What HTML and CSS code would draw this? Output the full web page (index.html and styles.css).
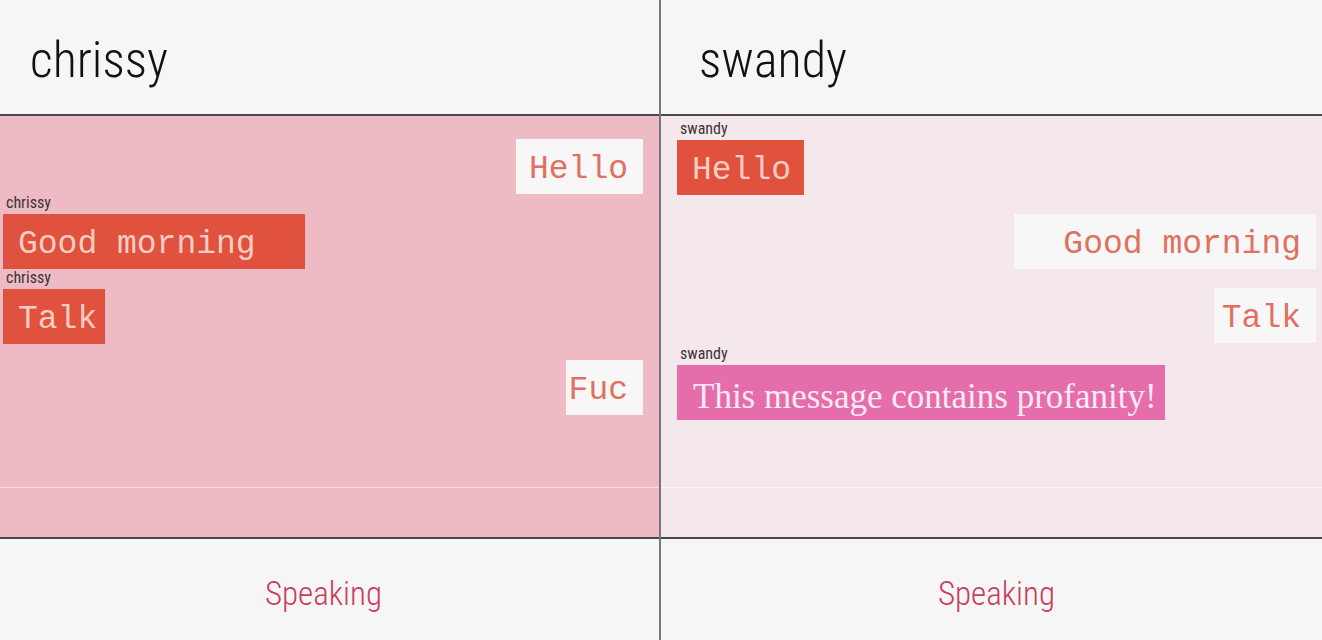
FILE: index.html
```html
<!DOCTYPE html>
<html lang="en">
<head>
<meta charset="utf-8">
<meta name="viewport" content="width=device-width, initial-scale=1">
<title>Chat</title>
<link rel="stylesheet" href="styles.css">
</head>
<body>
<main class="chat">
  <section class="panel panel-left">
    <header class="panel-header"><h1 class="name">chrissy</h1></header>
    <div class="messages">
      <div class="message sent"><p class="bubble" style="--chars: 5">Hello</p></div>
      <div class="message received"><span class="author">chrissy</span><p class="bubble" style="--chars: 12">Good morning</p></div>
      <div class="message received"><span class="author">chrissy</span><p class="bubble" style="--chars: 4">Talk</p></div>
      <div class="message sent"><p class="bubble" style="--chars: 3">Fuc</p></div>
    </div>
    <footer class="panel-footer"><button class="speak" type="button">Speaking</button></footer>
  </section>
  <section class="panel panel-right">
    <header class="panel-header"><h1 class="name">swandy</h1></header>
    <div class="messages">
      <div class="message received"><span class="author">swandy</span><p class="bubble" style="--chars: 5">Hello</p></div>
      <div class="message sent"><p class="bubble" style="--chars: 12">Good morning</p></div>
      <div class="message sent"><p class="bubble" style="--chars: 4">Talk</p></div>
      <div class="message received"><span class="author">swandy</span><p class="bubble warning">This message contains profanity!</p></div>
    </div>
    <footer class="panel-footer"><button class="speak" type="button">Speaking</button></footer>
  </section>
</main>
</body>
</html>
```
FILE: styles.css
```css
* {
  box-sizing: border-box;
}

body {
  margin: 0;
  background: #f6f6f6;
  color: #111;
  font-family: "Roboto Condensed", "Open Sans Condensed", "Lato", sans-serif;
}

.chat {
  display: grid;
  grid-template-columns: 1fr 1fr;
  min-height: 100vh;
}

.panel {
  display: flex;
  flex-direction: column;
}

.panel-left {
  border-right: 2px solid #77757a;
}

.panel-header {
  padding: 28px 30px 22px;
  border-bottom: 2px solid #4a4649;
}

.panel-right .panel-header {
  padding-left: 38px;
}

.name {
  margin: 0;
  font-size: 50px;
  line-height: 64px;
  font-weight: 300;
}

.messages {
  display: flex;
  flex-direction: column;
  flex: 1;
  padding: 4px 16px 0 3px;
  background: #eebbc5;
}

.panel-right .messages {
  padding: 4px 6px 0 16px;
  background: #f4e8ec;
}

.messages::after {
  content: "";
  height: 1px;
  margin: auto -16px 49px -16px;
  background: #f6dce1;
}

.panel-right .messages::after {
  margin-right: -6px;
  background: #faf4f6;
}

.message {
  display: flex;
  flex-direction: column;
  align-items: flex-start;
}

.message.sent {
  align-items: flex-end;
  padding-top: 19px;
}

.message.received + .message.sent:last-child {
  padding-top: 16px;
}

.message.sent + .message.received:last-child {
  padding-top: 2px;
}

.author {
  height: 20px;
  padding-left: 3px;
  color: #3c3438;
  font-size: 16px;
  line-height: 18px;
}

.bubble {
  width: calc(var(--chars) * 25px + 2px);
  margin: 0;
  padding: 6px 15px 0;
  font-family: "Liberation Mono", monospace;
  font-size: 33px;
  line-height: 49px;
  white-space: nowrap;
}

.received .bubble {
  background: #e0523d;
  color: #fbcdc2;
}

.sent .bubble {
  padding-left: 0;
  background: #f7f7f7;
  color: #e0705f;
  text-align: right;
}

.received .warning {
  width: auto;
  padding: 8px 8px 0 16px;
  background: #e66dab;
  color: #fdeaf4;
  font-family: "Liberation Serif", serif;
  font-size: 35px;
  line-height: 47px;
}

.panel-footer {
  display: flex;
  justify-content: center;
  padding: 31px 12px 22px 0;
  border-top: 2px solid #4a4649;
}

.panel-right .panel-footer {
  padding: 31px 0 22px 10px;
}

.speak {
  padding: 0;
  border: 0;
  background: none;
  color: #c93d5c;
  font-family: inherit;
  font-size: 33px;
  font-weight: 300;
  line-height: 48px;
  cursor: pointer;
}
```
